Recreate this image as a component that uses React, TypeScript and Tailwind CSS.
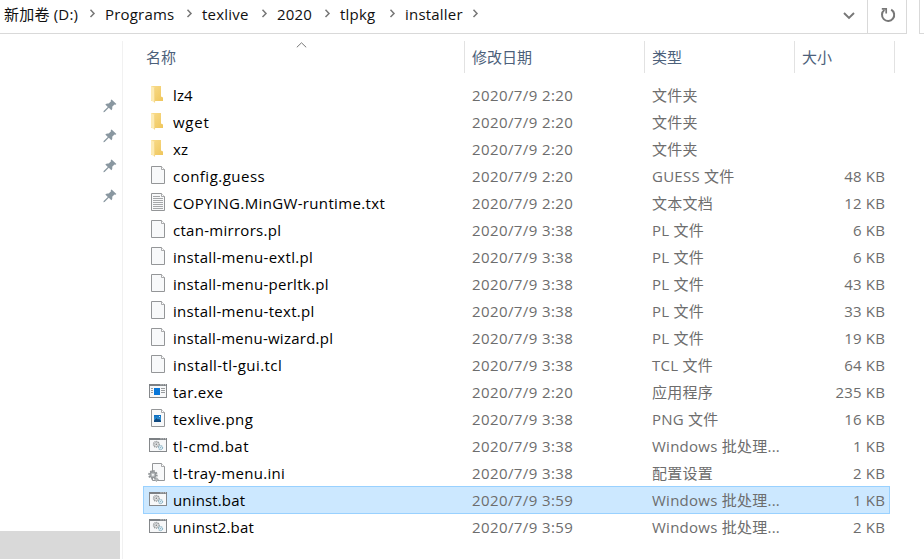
import React from "react";

type Kind = "folder" | "file" | "text" | "exe" | "image" | "batch" | "config";
type Entry = {
  name: string;
  date: string;
  type: string;
  size?: string;
  kind: Kind;
  track: string;
  selected?: boolean;
};

const EARLY = "2020/7/9 2:20";
const MID = "2020/7/9 3:38";
const LATE = "2020/7/9 3:59";

const entries: Entry[] = [
  { name: "lz4", date: EARLY, type: "文件夹", kind: "folder", track: "tracking-[0.1px]" },
  { name: "wget", date: EARLY, type: "文件夹", kind: "folder", track: "tracking-[0.75px]" },
  { name: "xz", date: EARLY, type: "文件夹", kind: "folder", track: "tracking-[0.15px]" },
  { name: "config.guess", date: EARLY, type: "GUESS 文件", size: "48 KB", kind: "file", track: "tracking-[0.48px]" },
  { name: "COPYING.MinGW-runtime.txt", date: EARLY, type: "文本文档", size: "12 KB", kind: "text", track: "tracking-[0.35px]" },
  { name: "ctan-mirrors.pl", date: MID, type: "PL 文件", size: "6 KB", kind: "file", track: "tracking-[0.28px]" },
  { name: "install-menu-extl.pl", date: MID, type: "PL 文件", size: "6 KB", kind: "file", track: "tracking-[0.3px]" },
  { name: "install-menu-perltk.pl", date: MID, type: "PL 文件", size: "43 KB", kind: "file", track: "tracking-[0.29px]" },
  { name: "install-menu-text.pl", date: MID, type: "PL 文件", size: "33 KB", kind: "file", track: "tracking-[0.3px]" },
  { name: "install-menu-wizard.pl", date: MID, type: "PL 文件", size: "19 KB", kind: "file", track: "tracking-[0.25px]" },
  { name: "install-tl-gui.tcl", date: MID, type: "TCL 文件", size: "64 KB", kind: "file", track: "tracking-[0.42px]" },
  { name: "tar.exe", date: EARLY, type: "应用程序", size: "235 KB", kind: "exe", track: "tracking-[0.25px]" },
  { name: "texlive.png", date: MID, type: "PNG 文件", size: "16 KB", kind: "image", track: "tracking-[0.42px]" },
  { name: "tl-cmd.bat", date: MID, type: "Windows 批处理...", size: "1 KB", kind: "batch", track: "tracking-[0.5px]" },
  { name: "tl-tray-menu.ini", date: MID, type: "配置设置", size: "2 KB", kind: "config", track: "tracking-[0.28px]" },
  { name: "uninst.bat", date: LATE, type: "Windows 批处理...", size: "1 KB", kind: "batch", track: "tracking-[0.15px]", selected: true },
  { name: "uninst2.bat", date: LATE, type: "Windows 批处理...", size: "2 KB", kind: "batch", track: "tracking-[0.15px]" },
];

function Page() {
  return (
    <>
      <path d="M3.5 .5H13.5L16.5 3.5V17.5H3.5Z" fill="#f8f9fa" stroke="#949698" />
      <path d="M13.5 .5V3.5H16.5" fill="#fff" stroke="#949698" strokeWidth=".8" />
    </>
  );
}

function Window() {
  return (
    <>
      <rect x="1.5" y="2.5" width="17" height="13" fill="#f7f8f9" stroke="#85888b" />
      <path d="M1 3H19" stroke="#7c8084" strokeWidth="2" />
      <path d="M12.5 2.8h1M14.7 2.8h1M16.9 2.8h1" stroke="#e8e8e8" />
    </>
  );
}

function FileIcon({ kind }: { kind: Kind }) {
  return (
    <svg width="21" height="21" viewBox="0 0 21 21" fill="none" className="shrink-0">
      {kind === "folder" && (
        <>
          <path d="M3 1H13V11.5L15 12.5V16H3Z" fill="url(#folderBack)" />
          <path d="M3 1L7 3V17.8L3 15.6Z" fill="#fdebb4" />
          <path d="M6.6 3V17.4" stroke="#f1cf78" strokeWidth=".8" />
        </>
      )}
      {(kind === "file" || kind === "text" || kind === "image") && <Page />}
      {kind === "text" && (
        <path d="M5 3.5H12M5 5.5H15M5 7.5H15M5 9.5H15M5 11.5H15M5 13.5H15M5 15.5H15" stroke="#9b9d9f" strokeWidth=".9" />
      )}
      {kind === "image" && (
        <>
          <rect x="6" y="6" width="7" height="7" fill="url(#photo)" />
          <path d="M6 13V11.5L8.5 9L10 10.5L11 9.8L13 11.8V13Z" fill="#114a80" />
          <rect x="11" y="7" width="1" height="1" fill="#d9f2ff" />
        </>
      )}
      {(kind === "exe" || kind === "batch") && <Window />}
      {kind === "exe" && (
        <>
          <rect x="6" y="6" width="6" height="7" fill="#0877d9" />
          <path d="M3 6.5H5M3 8.5H5M3 10.5H5M13 6.5H17M13 8.5H17M13 10.5H17" stroke="#9a9da0" />
        </>
      )}
      {kind === "batch" && (
        <>
          <circle cx="8.3" cy="8.3" r="2.9" stroke="#929597" strokeWidth="1.2" strokeDasharray="1.1 .8" />
          <circle cx="8.3" cy="8.3" r="2.2" fill="#e4e6e7" stroke="#9c9fa1" strokeWidth=".6" />
          <circle cx="8.3" cy="8.3" r=".8" fill="#76797b" />
          <circle cx="12.6" cy="11.6" r="2" fill="#e5f2f8" stroke="#86afc2" strokeWidth="1.1" strokeDasharray="1.2 .6" />
          <circle cx="12.6" cy="11.6" r=".6" fill="#7fa9bd" />
        </>
      )}
      {kind === "config" && (
        <>
          <path d="M4.5 .5H13.5L16.5 3.5V17.5H4.5Z" fill="#f8f9fa" stroke="#949698" />
          <path d="M13.5 .5V3.5H16.5" fill="#fff" stroke="#949698" strokeWidth=".8" />
          <circle cx="4.9" cy="11.8" r="4" stroke="#8f9396" strokeWidth="1.6" strokeDasharray="1.7 1.4" />
          <circle cx="4.9" cy="11.8" r="2.9" fill="#b5b9bb" stroke="#8f9396" strokeWidth="1.1" />
          <circle cx="4.9" cy="11.8" r="1.1" fill="#f4f5f6" />
          <circle cx="8.4" cy="16.6" r="1.7" fill="#b4b8ba" stroke="#94989a" strokeDasharray="1.1 .7" />
        </>
      )}
    </svg>
  );
}

function Pin() {
  return (
    <svg width="14" height="14" viewBox="0 0 14 14" className="block">
      <path
        d="M8.6 .4L13.4 5L12.5 5.8L11.5 5.5L9.2 7.8C9.5 9.2 9.3 10.3 8.4 11.2L5.8 8.7L1.6 13L.4 13.3L.7 12.1L4.8 7.9L2.3 5.4C3.2 4.6 4.4 4.3 5.7 4.6L8 2.2L7.7 1.2Z"
        fill="#8997a0"
      />
    </svg>
  );
}

const crumbs = [
  { label: "新加卷 (D:)", width: "w-[101px]" },
  { label: "Programs", width: "w-[97px]" },
  { label: "texlive", width: "w-[75px]" },
  { label: "2020", width: "w-[63px]" },
  { label: "tlpkg", width: "w-[65px]" },
  { label: "installer", width: "w-[83px]" },
];

function AddressBar() {
  return (
    <header className="flex h-[34px] shrink-0 gap-3">
      <div className="flex w-[907px] border-r border-b border-[#d9d9d9]">
        <nav className="flex h-[29px] grow items-center pl-[4px] text-[15px] tracking-[0.2px] text-[#111]">
          {crumbs.map((c) => (
            <div key={c.label} className={`flex shrink-0 items-center justify-between ${c.width}`}>
              <span>{c.label}</span>
              <svg width="7" height="9" viewBox="0 0 7 9" fill="none" className="mr-[9px] mb-[2px]">
                <path d="M1.5 .8L5 4.4L1.5 8" stroke="#777" strokeWidth="1.5" />
              </svg>
            </div>
          ))}
        </nav>
        <div className="flex w-[37px] items-center justify-center pb-[2px]">
          <svg width="12" height="8" viewBox="0 0 12 8" fill="none">
            <path d="M1 1L6 6L11 1" stroke="#777" strokeWidth="1.9" />
          </svg>
        </div>
        <div className="flex w-[39px] items-center justify-center border-l border-[#d9d9d9] pb-[3px] pl-[2px]">
          <svg width="16" height="16" viewBox="0 0 16 16" fill="none">
            <path d="M11.2 2.6A6.1 6.1 0 1 1 4.4 3" stroke="#777" strokeWidth="2" />
            <path d="M1.8 1.9H6.2V6.4" stroke="#777" strokeWidth="1.7" />
          </svg>
        </div>
      </div>
      <div className="grow border-b border-l border-[#d9d9d9]" />
    </header>
  );
}

export default function App() {
  return (
    <div className="flex h-[559px] w-[924px] flex-col overflow-hidden bg-white font-['Open_Sans','Noto_Sans_CJK_SC',sans-serif] leading-none whitespace-nowrap">
      <svg width="0" height="0" className="absolute">
        <defs>
          <linearGradient id="folderBack" x1="0" y1="0" x2="1" y2="1">
            <stop stopColor="#f9dc8c" />
            <stop offset="1" stopColor="#efc65c" />
          </linearGradient>
          <linearGradient id="photo" x1="0" y1="0" x2="0" y2="1">
            <stop stopColor="#0a69bd" />
            <stop offset="1" stopColor="#45aeea" />
          </linearGradient>
        </defs>
      </svg>
      <AddressBar />
      <div className="flex grow">
        <aside className="flex w-[120px] flex-col items-end pt-[65px] pr-[3px]">
          <div className="flex flex-col gap-4">
            <Pin />
            <Pin />
            <Pin />
            <Pin />
          </div>
          <div className="mt-auto -mr-[3px] h-[28px] w-[120px] bg-[#d9d9d9]" />
        </aside>
        <main className="mt-[7px] ml-[2px] flex grow flex-col border-l border-[#f1f1f1] pl-5">
          <div className="flex h-8 text-[15px] text-[#4c607a]">
            <div className="flex w-[322px] justify-between border-r border-[#e2e2e2] pl-[3px]">
              <span className="pt-[9px]">名称</span>
              <svg width="11" height="6" viewBox="0 0 11 6" fill="none" className="mt-[1px] mr-[157px]">
                <path d="M.8 5.3L5.5 .8L10.2 5.3" stroke="#777" />
              </svg>
            </div>
            <div className="w-[180px] border-r border-[#e2e2e2] pt-[9px] pl-[7px]">修改日期</div>
            <div className="w-[150px] border-r border-[#e2e2e2] pt-[9px] pl-[7px]">类型</div>
            <div className="w-[100px] border-r border-[#e2e2e2] pt-[9px] pl-[7px]">大小</div>
          </div>
          <ul className="mt-[9px] w-[747px] text-[15px] text-[#6d6d6d]">
            {entries.map((e) => (
              <li
                key={e.name}
                className={
                  e.selected
                    ? "-mt-px flex h-[28px] items-center border border-[#99d1ff] bg-[#cce8ff] pl-[4px]"
                    : "flex h-[27px] items-center pl-[5px]"
                }
              >
                <FileIcon kind={e.kind} />
                <span className={`ml-[4px] w-[299px] text-black ${e.track}`}>{e.name}</span>
                <span className="w-[180px] tracking-[0.4px]">{e.date}</span>
                <span className="w-[150px] tracking-[0.25px]">{e.type}</span>
                <span className="w-[83px] text-right tracking-[0.15px]">{e.size}</span>
              </li>
            ))}
          </ul>
        </main>
      </div>
    </div>
  );
}
